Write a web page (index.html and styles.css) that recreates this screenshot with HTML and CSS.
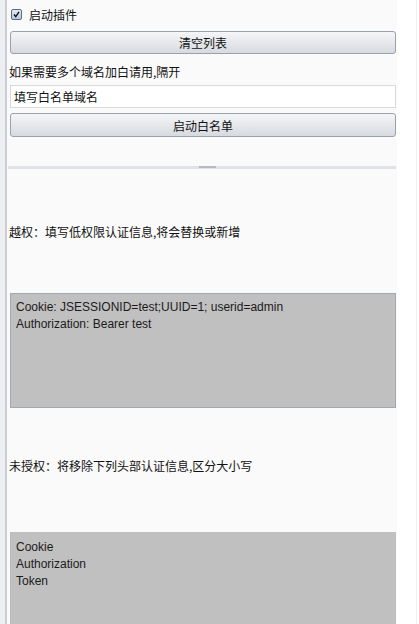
FILE: index.html
```html
<!DOCTYPE html>
<html>
<head>
<meta charset="utf-8">
<link rel="stylesheet" href="styles.css">
</head>
<body>
<div class="frame">
  <div class="left-strip"><div class="left-line"></div></div>
  <div class="panel">
    <label class="check-row">
      <span class="checkbox">
        <svg width="11" height="11" viewBox="0 0 11 11"><path d="M2.5 5.5 L4.6 8.2 L8.6 2.3" fill="none" stroke="#111" stroke-width="1.6"/></svg>
      </span>
      <span class="cn">启动插件</span>
    </label>
    <div class="btn btn-clear cn">清空列表</div>
    <div class="label label-tip cn">如果需要多个域名加白请用,隔开</div>
    <div class="input cn">填写白名单域名</div>
    <div class="btn btn-white cn">启动白名单</div>
    <div class="divider"><div class="grip"></div></div>
    <div class="label label-over cn">越权：填写低权限认证信息,将会替换或新增</div>
    <div class="area area-one">
      <div>Cookie: JSESSIONID=test;UUID=1; userid=admin</div>
      <div>Authorization: Bearer test</div>
    </div>
    <div class="label label-unauth cn">未授权：将移除下列头部认证信息,区分大小写</div>
    <div class="area area-two">
      <div>Cookie</div>
      <div>Authorization</div>
      <div>Token</div>
    </div>
  </div>
  <div class="right-strip"><div class="right-line"></div></div>
</div>
</body>
</html>
```

FILE: styles.css
```css
html, body {
  margin: 0;
  padding: 0;
  height: 100%;
  overflow: hidden;
  background: #ffffff;
}

.frame {
  display: flex;
  height: 624px;
  width: 419px;
}

.cn {
  font-family: "Noto Sans CJK SC", "Liberation Sans", sans-serif;
  font-size: 12px;
  color: #111;
}

.left-strip {
  width: 7px;
  background: #eceef1;
  display: flex;
  justify-content: flex-end;
}

.left-line {
  width: 2px;
  background: #c9cdd4;
  margin-right: 0;
}

.panel {
  width: 390px;
  background: #fafafa;
  display: flex;
  flex-direction: column;
  padding: 0 1px 0 3px;
  box-sizing: border-box;
}

.right-strip {
  flex: 1;
  background: #ffffff;
  display: flex;
  justify-content: flex-end;
  padding-right: 2px;
}

.right-line {
  width: 1px;
  background: #f0f0f2;
}

.check-row {
  height: 29px;
  display: flex;
  align-items: center;
  gap: 7px;
  padding-left: 1px;
}

.checkbox {
  width: 11px;
  height: 11px;
  box-sizing: border-box;
  border: 1px solid #5b6b82;
  border-radius: 2px;
  background: linear-gradient(#dfe8f4, #b9c9de);
  display: flex;
  align-items: center;
  justify-content: center;
}

.checkbox svg {
  display: block;
}

.btn {
  box-sizing: border-box;
  border: 1px solid #9aa1aa;
  border-radius: 3px;
  background: linear-gradient(#f5f6f8, #e4e6ea 55%, #d7dae0);
  display: flex;
  align-items: center;
  justify-content: center;
}

.btn-clear {
  margin-top: 2px;
  height: 23px;
}

.btn-white {
  margin-top: 5px;
  height: 24px;
}

.label {
  height: 20px;
  display: flex;
  align-items: center;
  margin-left: -1px;
}

.label-tip {
  margin-top: 7px;
}

.input {
  margin-top: 4px;
  height: 23px;
  box-sizing: border-box;
  border: 1px solid #d6d9de;
  background: #ffffff;
  display: flex;
  align-items: center;
  padding-left: 3px;
}

.divider {
  margin-top: 29px;
  margin-left: -2px;
  height: 3px;
  background: #dfe2e7;
  position: relative;
  display: flex;
  justify-content: center;
}

.grip {
  width: 17px;
  height: 2px;
  background: #b4b9c2;
  margin-left: 10px;
}

.label-over {
  margin-top: 52px;
}

.area {
  box-sizing: border-box;
  background: #c0c0c0;
  font-family: "Liberation Sans", Arial, sans-serif;
  font-size: 12px;
  line-height: 17px;
  color: #1b1b1b;
  padding: 5px 5px;
}

.area-one {
  margin-top: 52px;
  height: 115px;
  border: 1px solid #a3a9b2;
}

.label-unauth {
  margin-top: 47px;
}

.area-two {
  margin-top: 57px;
  flex: 1;
  border-top: 1px solid #c0c0c0;
  border-left: 1px solid #b7b9bd;
  padding-top: 6px;
}
```
